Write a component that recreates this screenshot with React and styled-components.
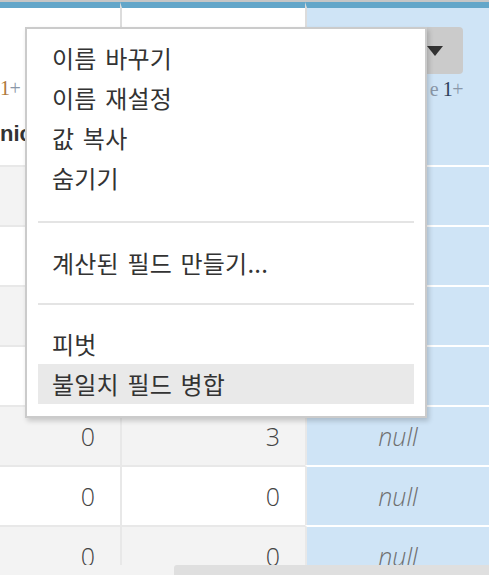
import React from 'react'
import styled, { createGlobalStyle } from 'styled-components'

const Global = createGlobalStyle`
  html, body {
    margin: 0;
    padding: 0;
    background: #fff;
    overflow: hidden;
  }
`

const Page = styled.div`
  position: relative;
  width: 489px;
  height: 575px;
  overflow: hidden;
  background: #fff;
`

const TopEdge = styled.div`
  height: 2px;
  background: #c6c6c6;
`

const Grid = styled.div`
  display: grid;
  grid-template-columns: 120px 185px 184px;
  grid-template-rows: 163px;
  grid-auto-rows: 60px;
  height: 563px;
  overflow: hidden;
`

const HeadCell = styled.div`
  box-sizing: border-box;
  border-top: 6px solid #63a6c9;
  border-left: ${({ $col }) => ($col > 0 ? '2px solid #dcdcdc' : 'none')};
  background: ${({ $col }) => ($col === 2 ? '#cfe4f6' : '#fff')};
  display: flex;
  flex-direction: column;
  align-items: ${({ $col }) => ($col === 2 ? 'flex-end' : 'flex-start')};
  padding: ${({ $col }) => ($col === 2 ? '19px 26px 0 0' : '69px 0 0 0')};
`

const Cell = styled.div`
  box-sizing: border-box;
  border-top: 2px solid ${({ $col }) => ($col === 2 ? '#fff' : '#e8e8e8')};
  border-left: ${({ $col }) => ($col > 0 ? '2px solid #e8e8e8' : 'none')};
  background: ${({ $col, $odd }) =>
    $col === 2 ? '#cfe4f6' : $odd ? '#f3f3f3' : '#fff'};
  display: flex;
  align-items: center;
  justify-content: ${({ $col }) => ($col === 2 ? 'center' : 'flex-end')};
  padding-right: ${({ $col }) => ($col === 2 ? '0' : '25px')};
  font-family: 'Open Sans', 'Liberation Sans', sans-serif;
  font-weight: 300;
  font-size: 25px;
  font-style: ${({ $col }) => ($col === 2 ? 'italic' : 'normal')};
  color: ${({ $col }) => ($col === 2 ? '#707070' : '#444')};
`

const Count = styled.div`
  font-family: 'Liberation Serif', serif;
  font-size: 20px;
  line-height: 22px;
  color: #8a97a8;
  letter-spacing: -0.5px;
`

const One = styled.span`
  color: ${({ $dark }) => ($dark ? '#2d3e5a' : '#b07a3a')};
`

const FieldName = styled.div`
  margin-top: 22px;
  font-family: 'Liberation Sans', Arial, sans-serif;
  font-weight: 700;
  font-size: 22px;
  color: #333;
`

const DropButton = styled.div`
  width: 46px;
  height: 47px;
  border-radius: 4px;
  background: #cbcbcb;
  display: flex;
  align-items: center;
  justify-content: center;
  margin-bottom: 4px;

  &::after {
    content: '';
    margin-left: -10px;
    border-left: 8px solid transparent;
    border-right: 8px solid transparent;
    border-top: 10px solid #333;
  }
`

const Scrollbar = styled.div`
  height: 10px;
  background: #f3f3f3;
  display: flex;
  justify-content: flex-end;
`

const Thumb = styled.div`
  width: 315px;
  background: #dfdfdf;
  border-top-left-radius: 3px;
`

const Menu = styled.div`
  position: absolute;
  left: 25px;
  top: 27px;
  width: 402px;
  box-sizing: border-box;
  border: 2px solid #cbcbcb;
  background: #fff;
  box-shadow: 2px 3px 5px rgba(0, 0, 0, 0.18);
  padding: 9px 11px 12px;
`

const Item = styled.div`
  height: 40px;
  line-height: 40px;
  padding-left: 14px;
  font-family: 'Noto Sans CJK KR', 'Noto Sans', sans-serif;
  font-size: 24px;
  letter-spacing: 0.2px;
  word-spacing: 3px;
  color: #333;
  background: ${({ $active }) => ($active ? '#e9e9e9' : 'transparent')};
`

const Separator = styled.div`
  height: 2px;
  background: #e4e4e4;
  margin: ${({ $last }) => ($last ? '20px 0 19px' : '23px 0 20px')};
`

const rows = [
  ['', '', ''],
  ['', '', ''],
  ['', '', ''],
  ['', '', ''],
  ['0', '3', 'null'],
  ['0', '0', 'null'],
  ['0', '0', 'null'],
]

export default function App() {
  return (
    <Page>
      <Global />
      <TopEdge />
      <Grid>
        <HeadCell $col={0}>
          <Count>
            <One>1</One>+
          </Count>
          <FieldName>nic</FieldName>
        </HeadCell>
        <HeadCell $col={1} />
        <HeadCell $col={2}>
          <DropButton />
          <Count>
            e <One $dark>1</One>+
          </Count>
        </HeadCell>
        {rows.map((row, i) =>
          row.map((v, c) => (
            <Cell key={`${i}-${c}`} $col={c} $odd={i % 2 === 0}>
              {v}
            </Cell>
          ))
        )}
      </Grid>
      <Scrollbar>
        <Thumb />
      </Scrollbar>

      <Menu>
        <Item>이름 바꾸기</Item>
        <Item>이름 재설정</Item>
        <Item>값 복사</Item>
        <Item>숨기기</Item>
        <Separator />
        <Item>계산된 필드 만들기...</Item>
        <Separator $last />
        <Item>피벗</Item>
        <Item $active>불일치 필드 병합</Item>
      </Menu>
    </Page>
  )
}
